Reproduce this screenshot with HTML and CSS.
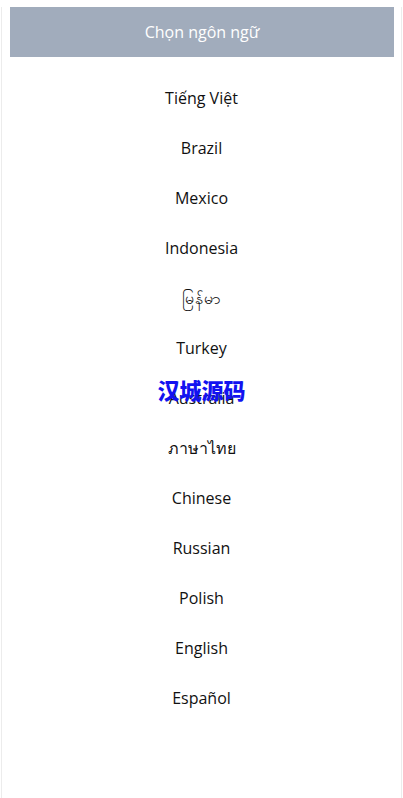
FILE: index.html
```html
<!DOCTYPE html>
<html lang="vi">
<head>
<meta charset="utf-8">
<title>Chọn ngôn ngữ</title>
<link rel="stylesheet" href="styles.css">
</head>
<body>
<div class="frame">
  <div class="header">Chọn ngôn ngữ</div>
  <ul class="langs">
    <li>Tiếng Việt</li>
    <li>Brazil</li>
    <li>Mexico</li>
    <li>Indonesia</li>
    <li>မြန်မာ</li>
    <li>Turkey</li>
    <li>Australia</li>
    <li>ภาษาไทย</li>
    <li>Chinese</li>
    <li>Russian</li>
    <li>Polish</li>
    <li>English</li>
    <li>Español</li>
  </ul>
  <div class="watermark">汉城源码</div>
</div>
</body>
</html>
```
FILE: styles.css
```css
html, body {
  margin: 0;
  padding: 0;
  background: #fff;
}
body {
  font-family: "Open Sans", "Noto Sans", "Noto Sans CJK SC", sans-serif;
}
.frame {
  position: relative;
  box-sizing: border-box;
  margin: 0 1px;
  height: 798px;
  border: 1px solid #ececec;
  border-top: none;
}
.header {
  margin: 7px 7px 0 8px;
  height: 50px;
  line-height: 50px;
  background: #a1acbc;
  color: #fff;
  text-align: center;
  font-size: 16px;
}
.langs {
  list-style: none;
  margin: 0;
  padding: 16px 0 0;
}
.langs li {
  height: 50px;
  line-height: 50px;
  text-align: center;
  font-size: 16px;
  color: #111;
}
.watermark {
  position: absolute;
  left: 0;
  right: 0;
  top: 368px;
  text-align: center;
  font-family: "Noto Sans CJK SC", sans-serif;
  font-weight: 900;
  font-size: 22px;
  line-height: 28px;
  color: #1212f0;
}
```
